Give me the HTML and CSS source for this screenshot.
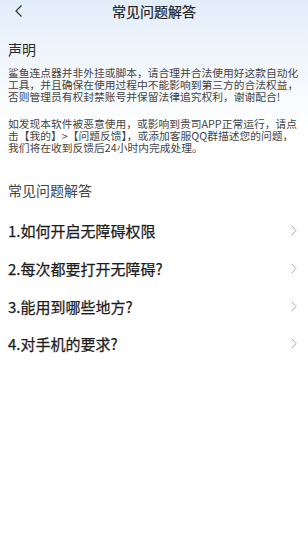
FILE: index.html
```html
<!DOCTYPE html>
<html lang="zh">
<head>
<meta charset="utf-8">
<link rel="stylesheet" href="styles.css">
</head>
<body>
<div class="page">
  <header class="topbar">
    <svg class="back" width="10" height="14" viewBox="0 0 10 14"><path d="M7.5 1.5 L2 7 L7.5 12.5" fill="none" stroke="#333" stroke-width="1.2"/></svg>
    <div class="title">常见问题解答</div>
  </header>
  <section class="notice">
    <h2 class="notice-title">声明</h2>
    <p class="notice-text">鲨鱼连点器并非外挂或脚本，请合理并合法使用好这款自动化工具，并且确保在使用过程中不能影响到第三方的合法权益，否则管理员有权封禁账号并保留法律追究权利，谢谢配合!</p>
    <p class="notice-text">如发现本软件被恶意使用，或影响到贵司APP正常运行，请点击【我的】&gt;【问题反馈】，或添加客服QQ群描述您的问题，我们将在收到反馈后24小时内完成处理。</p>
  </section>
  <h3 class="faq-head">常见问题解答</h3>
  <ul class="faq">
    <li class="faq-item"><span>1.如何开启无障碍权限</span><svg class="chev" width="6" height="11" viewBox="0 0 6 11"><path d="M0.7 0.7 L5 5.5 L0.7 10.3" fill="none" stroke="#a8a8a8" stroke-width="1"/></svg></li>
    <li class="faq-item"><span>2.每次都要打开无障碍?</span><svg class="chev" width="6" height="11" viewBox="0 0 6 11"><path d="M0.7 0.7 L5 5.5 L0.7 10.3" fill="none" stroke="#a8a8a8" stroke-width="1"/></svg></li>
    <li class="faq-item"><span>3.能用到哪些地方?</span><svg class="chev" width="6" height="11" viewBox="0 0 6 11"><path d="M0.7 0.7 L5 5.5 L0.7 10.3" fill="none" stroke="#a8a8a8" stroke-width="1"/></svg></li>
    <li class="faq-item"><span>4.对手机的要求?</span><svg class="chev" width="6" height="11" viewBox="0 0 6 11"><path d="M0.7 0.7 L5 5.5 L0.7 10.3" fill="none" stroke="#a8a8a8" stroke-width="1"/></svg></li>
  </ul>
</div>
</body>
</html>
```
FILE: styles.css
```css
* { box-sizing: border-box; margin: 0; padding: 0; }
html, body { width: 308px; height: 543px; }
body {
  font-family: "Noto Sans CJK SC", "Noto Sans", sans-serif;
  color: #222;
  background: linear-gradient(180deg, #e2edfa 0px, #f1f6fc 60px, #ffffff 130px, #ffffff 100%);
  overflow: hidden;
}
.page { padding: 0 8px; }
.topbar {
  position: relative;
  height: 23px;
  display: flex;
  align-items: center;
  justify-content: center;
}
.back { position: absolute; left: 6px; top: 4px; }
.title { font-size: 14px; font-weight: 400; -webkit-text-stroke: 0.2px #222; color: #222; line-height: 23px; }
.notice { padding-top: 16px; }
.notice-title { font-size: 14px; font-weight: 400; color: #2a2a2a; line-height: 20px; }
.notice-text {
  margin-top: 8px;
  font-size: 10.75px;
  line-height: 12px;
  color: #444;
}
.notice-text + .notice-text { margin-top: 15px; }
.faq-head { margin-top: 26px; font-size: 14px; font-weight: 400; color: #444; line-height: 20px; }
.faq { list-style: none; margin-top: 12px; }
.faq-item {
  height: 37.7px;
  display: flex;
  align-items: center;
  justify-content: space-between;
  font-size: 15px;
  font-weight: 400;
  -webkit-text-stroke: 0.25px #1c1c1c;
  color: #1c1c1c;
}
.chev { margin-right: 3px; }
```
